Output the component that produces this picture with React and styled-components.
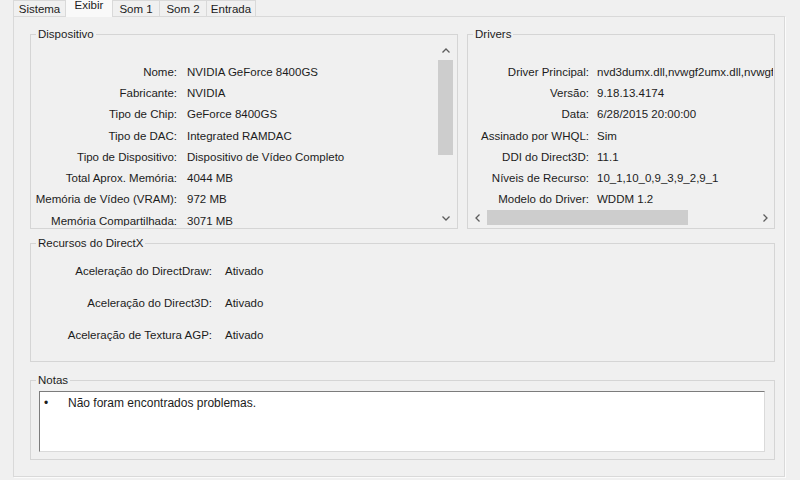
import React from 'react';
import styled, { createGlobalStyle, css } from 'styled-components';

const GlobalStyle = createGlobalStyle`
  html, body {
    margin: 0;
    padding: 0;
    background: #f0f0f0;
  }
  body {
    font-family: 'Liberation Sans', Arial, sans-serif;
    font-size: 11.5px;
    color: #1c1c1c;
  }
`;

const Window = styled.div`
  width: 800px;
  height: 480px;
  overflow: hidden;
  background: #f0f0f0;
  padding-left: 13px;
  box-sizing: border-box;
`;

const TabStrip = styled.div`
  display: flex;
  align-items: flex-end;
  height: 16px;
`;

const Tab = styled.div`
  box-sizing: border-box;
  width: ${({ w }) => w}px;
  height: 16px;
  margin-right: -1px;
  border: 1px solid #d9d9d9;
  border-bottom: none;
  background: #f0f0f0;
  display: flex;
  justify-content: center;
  align-items: center;
  padding-top: 1px;
  white-space: nowrap;

  ${({ active }) =>
    active &&
    css`
      height: 19px;
      margin-bottom: -1px;
      padding-top: 0;
      padding-bottom: 6px;
      background: #f9f9f9;
      position: relative;
      z-index: 1;
    `}
`;

const Panel = styled.div`
  box-sizing: border-box;
  width: 772px;
  height: 461px;
  border: 1px solid #d9d9d9;
  box-shadow: 1px 1px 0 #fbfbfb;
  background: #f0f0f0;
  padding: 11px 9px 0 16px;
  display: flex;
  flex-direction: column;
`;

const TopRow = styled.div`
  display: flex;
  gap: 9px;
  height: 201px;
  flex: none;
`;

const Group = styled.fieldset`
  box-sizing: border-box;
  margin: 0;
  min-width: 0;
  padding: 0;
  border: 1px solid #d5d5d5;
  width: ${({ w }) => (w ? `${w}px` : 'auto')};
  height: ${({ h }) => h}px;
  margin-top: ${({ mt }) => mt || 0}px;
  flex: ${({ grow }) => (grow ? '1' : 'none')};
  display: flex;
  flex-direction: column;
`;

const Legend = styled.legend`
  margin-left: 5px;
  padding: 0 2px;
  line-height: 13px;
  font-size: 11.5px;
`;

const ListArea = styled.div`
  display: flex;
  height: 184px;
  margin-top: 1px;
  margin-right: 3px;
`;

const Rows = styled.div`
  flex: 1;
  overflow: hidden;
  padding-top: ${({ pt }) => pt}px;
  box-sizing: border-box;
`;

const Row = styled.div`
  display: flex;
  height: ${({ rh }) => rh}px;
  align-items: center;
  white-space: nowrap;
  margin-bottom: ${({ gap }) => gap || 0}px;
`;

const Label = styled.div`
  flex: none;
  width: ${({ w }) => w}px;
  text-align: right;
`;

const Value = styled.div`
  margin-left: ${({ ml }) => ml}px;
  white-space: nowrap;
`;

const VScroll = styled.div`
  width: 17px;
  display: flex;
  flex-direction: column;
  align-items: center;
`;

const ArrowBox = styled.div`
  width: 17px;
  height: 17px;
  flex: none;
  display: flex;
  align-items: center;
  justify-content: center;
`;

const VThumb = styled.div`
  width: 15px;
  height: 95px;
  margin-top: 1px;
  background: #cdcdcd;
`;

const Spacer = styled.div`
  flex: 1;
`;

const DriverBody = styled.div`
  display: flex;
  flex-direction: column;
  height: 185px;
  padding: 0 1px;
`;

const HScroll = styled.div`
  height: 17px;
  flex: none;
  display: flex;
  align-items: center;
`;

const HThumb = styled.div`
  width: 201px;
  height: 15px;
  margin-left: 1px;
  background: #cdcdcd;
`;

const FeatureRows = styled.div`
  padding-top: 11px;
`;

const NotesBox = styled.div`
  margin: 4px 9px 0 8px;
  height: 61px;
  box-sizing: border-box;
  background: #fff;
  border: 1px solid;
  border-color: #7c7c7c #dadada #dadada #7c7c7c;
  padding: 3px 0 0 4px;
  font-size: 12px;
`;

const NoteItem = styled.div`
  display: flex;
  align-items: center;
  height: 15px;
`;

const Bullet = styled.span`
  width: 24px;
  flex: none;
`;

const Chevron = ({ dir }) => {
  const paths = {
    up: 'M1.5 5.5 L5 2 L8.5 5.5',
    down: 'M1.5 2.5 L5 6 L8.5 2.5',
    left: 'M5.5 1.5 L2 5 L5.5 8.5',
    right: 'M2.5 1.5 L6 5 L2.5 8.5',
  };
  const horiz = dir === 'left' || dir === 'right';
  return (
    <svg width={horiz ? 8 : 10} height={horiz ? 10 : 8} viewBox={horiz ? '0 0 8 10' : '0 0 10 8'}>
      <path d={paths[dir]} fill="none" stroke="#5d5d5d" strokeWidth="1.3" />
    </svg>
  );
};

const tabs = [
  ['Sistema', 53],
  ['Exibir', 48],
  ['Som 1', 48],
  ['Som 2', 48],
  ['Entrada', 50],
];

const device = [
  ['Nome:', 'NVIDIA GeForce 8400GS'],
  ['Fabricante:', 'NVIDIA'],
  ['Tipo de Chip:', 'GeForce 8400GS'],
  ['Tipo de DAC:', 'Integrated RAMDAC'],
  ['Tipo de Dispositivo:', 'Dispositivo de Vídeo Completo'],
  ['Total Aprox. Memória:', '4044 MB'],
  ['Memória de Vídeo (VRAM):', '972 MB'],
  ['Memória Compartilhada:', '3071 MB'],
];

const drivers = [
  ['Driver Principal:', 'nvd3dumx.dll,nvwgf2umx.dll,nvwgf2umx.dll,nvwgf2umx.dll'],
  ['Versão:', '9.18.13.4174'],
  ['Data:', '6/28/2015 20:00:00'],
  ['Assinado por WHQL:', 'Sim'],
  ['DDI do Direct3D:', '11.1'],
  ['Níveis de Recurso:', '10_1,10_0,9_3,9_2,9_1'],
  ['Modelo do Driver:', 'WDDM 1.2'],
];

const features = [
  ['Aceleração do DirectDraw:', 'Ativado'],
  ['Aceleração do Direct3D:', 'Ativado'],
  ['Aceleração de Textura AGP:', 'Ativado'],
];

export default function App() {
  return (
    <Window>
      <GlobalStyle />
      <TabStrip>
        {tabs.map(([name, w]) => (
          <Tab key={name} w={w} active={name === 'Exibir'}>
            {name}
          </Tab>
        ))}
      </TabStrip>
      <Panel>
        <TopRow>
          <Group w={428} h={201}>
            <Legend>Dispositivo</Legend>
            <ListArea>
              <Rows pt={19}>
                {device.map(([k, v]) => (
                  <Row key={k} rh={21.3}>
                    <Label w={146}>{k}</Label>
                    <Value ml={10}>{v}</Value>
                  </Row>
                ))}
              </Rows>
              <VScroll>
                <ArrowBox>
                  <Chevron dir="up" />
                </ArrowBox>
                <VThumb />
                <Spacer />
                <ArrowBox>
                  <Chevron dir="down" />
                </ArrowBox>
              </VScroll>
            </ListArea>
          </Group>
          <Group grow h={201}>
            <Legend>Drivers</Legend>
            <DriverBody>
              <Rows pt={20}>
                {drivers.map(([k, v]) => (
                  <Row key={k} rh={21.3}>
                    <Label w={120}>{k}</Label>
                    <Value ml={8}>{v}</Value>
                  </Row>
                ))}
              </Rows>
              <HScroll>
                <ArrowBox>
                  <Chevron dir="left" />
                </ArrowBox>
                <HThumb />
                <Spacer />
                <ArrowBox>
                  <Chevron dir="right" />
                </ArrowBox>
              </HScroll>
            </DriverBody>
          </Group>
        </TopRow>
        <Group h={125} mt={8}>
          <Legend>Recursos do DirectX</Legend>
          <FeatureRows>
            {features.map(([k, v]) => (
              <Row key={k} rh={20} gap={12}>
                <Label w={181}>{k}</Label>
                <Value ml={13}>{v}</Value>
              </Row>
            ))}
          </FeatureRows>
        </Group>
        <Group h={86} mt={12}>
          <Legend>Notas</Legend>
          <NotesBox>
            <NoteItem>
              <Bullet>•</Bullet>
              Não foram encontrados problemas.
            </NoteItem>
          </NotesBox>
        </Group>
      </Panel>
    </Window>
  );
}
